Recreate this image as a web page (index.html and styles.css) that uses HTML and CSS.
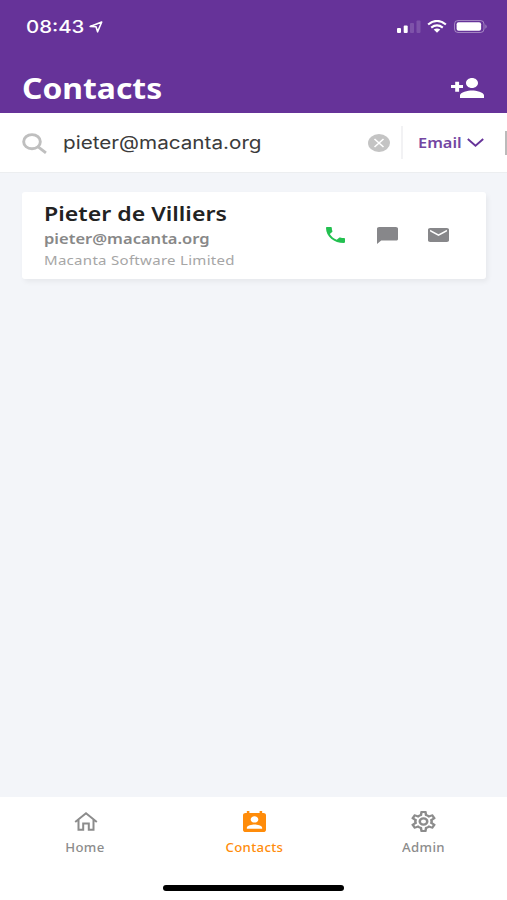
FILE: index.html
```html
<!DOCTYPE html>
<html lang="en">
<head>
    <meta charset="UTF-8">
    <meta name="viewport" content="width=device-width, initial-scale=1.0">
    <title>Contacts</title>
    <link rel="stylesheet" href="styles.css">
</head>
<body>
    <header class="header">
        <div class="status-bar">
            <span class="time">08:43</span>
            <svg class="location" viewBox="0 0 14 12" preserveAspectRatio="none">
                <path d="M1.2 5.4L12.7 1 8.6 10.8 7 5.8z" />
            </svg>
            <svg class="signal" viewBox="0 0 24 13">
                <rect x="0" y="8" width="4" height="5" rx="1" />
                <rect x="6.7" y="5.6" width="4" height="7.4" rx="1" />
                <rect class="off" x="13" y="3" width="4" height="10" rx="1" />
                <rect class="off" x="19.5" y="0.5" width="4" height="12.5" rx="1" />
            </svg>
            <svg class="wifi" viewBox="0 0 20 13">
                <path d="M1.1 4.5Q10-2.6 18.9 4.5M4.2 7.6Q10 3.2 15.8 7.6" />
                <path class="dot" d="M6.7 9.6Q10 7.3 13.3 9.6L10 12.8z" />
            </svg>
            <svg class="battery" viewBox="0 0 34 13">
                <rect class="shell" x="0.5" y="0.5" width="29.5" height="12" rx="3.5" />
                <rect x="2.6" y="2.3" width="24.5" height="8.4" rx="2" />
                <path class="tip" d="M31.4 4.2q2.6 2.3 0 4.6z" />
            </svg>
        </div>
        <div class="title-bar">
            <h1>Contacts</h1>
            <svg class="add-contact" viewBox="1 4 22 16" preserveAspectRatio="none">
                <path d="M15 12c2.21 0 4-1.79 4-4s-1.79-4-4-4-4 1.79-4 4 1.79 4 4 4zm-8.6-2.4V7H3.8v2.6H1v2.3h2.8V15h2.6v-3.1H9V9.6H6.4zM15 14c-2.67 0-8 1.34-8 4v2h16v-2c0-2.66-5.33-4-8-4z" />
            </svg>
        </div>
    </header>

    <div class="search-bar">
        <svg class="search-icon" viewBox="0 0 24 20">
            <ellipse cx="9.6" cy="8.3" rx="8" ry="6.8" />
            <path d="M15.5 13.3L23 19" />
        </svg>
        <span class="query">pieter@macanta.org</span>
        <svg class="clear" viewBox="0 0 22 18">
            <ellipse cx="11" cy="9" rx="11" ry="9" />
            <path d="M6.5 5l9 8M15.5 5l-9 8" />
        </svg>
        <div class="filter">
            <span class="filter-name">Email</span>
            <svg class="chevron" viewBox="0 0 17 9" preserveAspectRatio="none">
                <path d="M0.8 1L8.5 7.7 16.2 1" />
            </svg>
        </div>
        <span class="next-filter"></span>
    </div>

    <main class="results">
        <div class="card">
            <div class="person">
                <h2>Pieter de Villiers</h2>
                <p class="email">pieter@macanta.org</p>
                <p class="company">Macanta Software Limited</p>
            </div>
            <div class="actions">
                <svg class="phone" viewBox="3 3 18 18" preserveAspectRatio="none">
                    <path d="M6.62 10.79c1.44 2.83 3.76 5.14 6.59 6.59l2.2-2.2c.27-.27.67-.36 1.02-.24 1.12.37 2.33.57 3.57.57.55 0 1 .45 1 1V20c0 .55-.45 1-1 1-9.39 0-17-7.61-17-17 0-.55.45-1 1-1h3.5c.55 0 1 .45 1 1 0 1.25.2 2.45.57 3.57.11.35.03.74-.25 1.02l-2.2 2.2z" />
                </svg>
                <svg class="chat" viewBox="2 2 20 20" preserveAspectRatio="none">
                    <path d="M20 2H4c-1.1 0-2 .9-2 2v18l4-4h14c1.1 0 2-.9 2-2V4c0-1.1-.9-2-2-2z" />
                </svg>
                <svg class="mail" viewBox="2 4 20 16" preserveAspectRatio="none">
                    <path d="M20 4H4c-1.1 0-2 .9-2 2v12c0 1.1.9 2 2 2h16c1.1 0 2-.9 2-2V6c0-1.1-.9-2-2-2zm0 4l-8 5-8-5V6l8 5 8-5v2z" />
                </svg>
            </div>
        </div>
    </main>

    <footer class="footer">
        <nav class="tabs">
            <a class="tab">
                <svg class="home-icon" viewBox="0 0 24 19">
                    <path d="M1.2 10L12 1.2 22.8 10M4.5 8v9.7h4.7v-6.2h5.6v6.2h4.7V8" />
                </svg>
                <span>Home</span>
            </a>
            <a class="tab active">
                <svg class="contacts-icon" viewBox="3 1 18 20" preserveAspectRatio="none">
                    <path d="M19 3h-1V1h-2v2H8V1H6v2H5c-1.11 0-2 .9-2 2v14c0 1.1.89 2 2 2h14c1.1 0 2-.9 2-2V5c0-1.1-.9-2-2-2zm-7 3c1.66 0 3 1.34 3 3s-1.34 3-3 3-3-1.34-3-3 1.34-3 3-3zm6 12H6v-1c0-2 4-3.1 6-3.1s6 1.1 6 3.1v1z" />
                </svg>
                <span>Contacts</span>
            </a>
            <a class="tab">
                <svg class="admin-icon" viewBox="2 2 20 20" preserveAspectRatio="none">
                    <path d="M12 8a4 4 0 0 1 4 4 4 4 0 0 1-4 4 4 4 0 0 1-4-4 4 4 0 0 1 4-4m0 2a2 2 0 0 0-2 2 2 2 0 0 0 2 2 2 2 0 0 0 2-2 2 2 0 0 0-2-2m-2 12c-.25 0-.46-.18-.5-.42l-.37-2.65c-.63-.25-1.17-.59-1.69-.99l-2.49 1.01c-.22.08-.49 0-.61-.22l-2-3.46c-.13-.22-.07-.49.12-.64l2.11-1.66L4.5 12l.07-1-2.11-1.63c-.19-.15-.25-.42-.12-.64l2-3.46c.12-.22.39-.31.61-.22l2.49 1c.52-.39 1.06-.73 1.69-.98l.37-2.65c.04-.24.25-.42.5-.42h4c.25 0 .46.18.5.42l.37 2.65c.63.25 1.17.59 1.69.98l2.49-1c.22-.09.49 0 .61.22l2 3.46c.13.22.07.49-.12.64L19.43 11l.07 1-.07 1 2.11 1.63c.19.15.25.42.12.64l-2 3.46c-.12.22-.39.31-.61.22l-2.49-1c-.52.39-1.06.73-1.69.98l-.37 2.65c-.04.24-.25.42-.5.42h-4m1.25-18-.37 2.61c-1.2.25-2.26.89-3.03 1.78L5.44 7.35l-.75 1.3L6.8 10.2a5.55 5.55 0 0 0 0 3.6l-2.12 1.56.75 1.3 2.43-1.04c.77.88 1.82 1.52 3.01 1.76l.37 2.62h1.52l.37-2.61c1.19-.25 2.24-.89 3.01-1.77l2.43 1.04.75-1.3-2.12-1.55c.4-1.17.4-2.44 0-3.61l2.11-1.55-.75-1.3-2.41 1.04a5.42 5.42 0 0 0-3.03-1.77L12.75 4h-1.5z" />
                </svg>
                <span>Admin</span>
            </a>
        </nav>
        <div class="home-indicator"></div>
    </footer>
</body>
</html>
```

FILE: styles.css
```css
* {
    box-sizing: border-box;
}
body {
    margin: 0;
    height: 900px;
    display: flex;
    flex-direction: column;
    overflow: hidden;
    background-color: #f3f5f9;
    font-family: "Noto Sans", sans-serif;
}
h1, h2, p {
    margin: 0;
}
svg {
    display: block;
    flex: none;
    fill: currentColor;
}
/* wide lettering */
.time, .query, .filter-name, h1, h2, p {
    transform: scaleX(1.155);
    transform-origin: left center;
    white-space: nowrap;
}
.header {
    height: 113px;
    flex: none;
    background-color: #663399;
    color: #fff;
}
.status-bar {
    height: 52px;
    padding: 1px 19px 0 26px;
    display: flex;
    align-items: center;
}
.time {
    width: 63px;
    font: 500 17px/20px Inter, sans-serif;
    transform: scaleX(1.2);
}
.location {
    width: 14px;
    height: 12px;
    margin-right: auto;
    fill: none;
    stroke: #fff;
    stroke-width: 1.6;
    stroke-linejoin: round;
}
.signal {
    width: 24px;
    height: 13px;
}
.signal .off {
    opacity: 0.16;
}
.wifi {
    width: 20px;
    height: 13px;
    margin: 0 7px 0 6px;
    fill: none;
    stroke: #fff;
    stroke-width: 2.2;
}
.wifi .dot {
    fill: #fff;
    stroke: none;
}
.battery {
    width: 34px;
    height: 13px;
}
.battery .shell {
    fill: none;
    stroke: #fff;
    opacity: 0.4;
}
.battery .tip {
    opacity: 0.4;
}
.title-bar {
    height: 61px;
    padding: 10px 23px 0 22px;
    display: flex;
    align-items: center;
    justify-content: space-between;
}
h1 {
    font-size: 28px;
    line-height: 38px;
    font-weight: 700;
    transform: scaleX(1.137);
}
.add-contact {
    width: 33px;
    height: 20px;
}
.search-bar {
    height: 60px;
    flex: none;
    display: flex;
    align-items: center;
    padding-left: 22px;
    background-color: #fff;
    border-bottom: 1px solid #eceef0;
}
.search-icon {
    width: 25px;
    height: 21px;
    margin-top: 2px;
    fill: none;
    stroke: #bfbfbf;
    stroke-width: 2.8;
}
.query {
    width: 305px;
    margin-left: 16px;
    font: 400 18px/24px Inter, sans-serif;
    color: #3b3b3b;
    transform: scaleX(1.148);
}
.clear {
    width: 22px;
    height: 18px;
    margin-right: 11px;
    fill: #c4c4c4;
    stroke: none;
}
.clear path {
    stroke: #fff;
    stroke-width: 1.6;
}
.filter {
    height: 33px;
    display: flex;
    align-items: center;
    padding-left: 15px;
    border-left: 2px solid #f2f2f4;
    color: #663399;
}
.filter-name {
    width: 49px;
    font-size: 14px;
    font-weight: 600;
    opacity: 0.9;
    transform: scaleX(1.17);
}
.chevron {
    width: 17px;
    height: 9px;
    fill: none;
    stroke: currentColor;
    stroke-width: 1.9;
}
.next-filter {
    width: 2px;
    height: 24px;
    margin-left: auto;
    background-color: #bbb;
}
.results {
    flex: 1;
    padding: 19px 22px;
}
.card {
    height: 87px;
    width: 464px;
    padding: 8px 37px 0 22px;
    display: flex;
    justify-content: space-between;
    background-color: #fff;
    border-radius: 3px;
    box-shadow: 2px 3px 5px rgba(0, 0, 0, 0.05);
}
h2 {
    font-size: 20px;
    line-height: 27px;
    font-weight: 600;
    color: #222;
}
.email {
    font-size: 14.5px;
    line-height: 22px;
    font-weight: 600;
    color: #888;
    transform: scaleX(1.14);
}
.company {
    font-size: 13px;
    line-height: 22px;
    letter-spacing: 0.25px;
    color: #a6a6a6;
}
.actions {
    display: flex;
    align-items: center;
    height: 70px;
    color: #87878a;
}
.phone {
    width: 19px;
    height: 16px;
    color: #23c050;
}
.chat {
    width: 21px;
    height: 17px;
    margin: 0 30px 0 32px;
}
.mail {
    width: 21px;
    height: 14px;
}
.footer {
    height: 103px;
    flex: none;
    background-color: #fff;
}
.tabs {
    height: 88px;
    display: flex;
}
.tab {
    flex: 1;
    display: flex;
    flex-direction: column;
    align-items: center;
    padding-top: 14px;
    color: #8c8c8c;
    font-size: 12px;
    line-height: 18px;
    font-weight: 500;
    letter-spacing: 0.3px;
}
.tab svg {
    margin-left: 2px;
}
.tab span {
    margin-top: 7px;
    padding-left: 1px;
    transform: scaleX(1.1);
}
.tab.active {
    color: #ff8c0a;
}
.home-icon {
    width: 24px;
    height: 21px;
    fill: none;
    stroke: currentColor;
    stroke-width: 2;
}
.contacts-icon {
    width: 23px;
    height: 21px;
}
.admin-icon {
    width: 25px;
    height: 21px;
}
.home-indicator {
    width: 181px;
    height: 6px;
    margin: 0 auto;
    border-radius: 3px;
    background-color: #000;
}
```
